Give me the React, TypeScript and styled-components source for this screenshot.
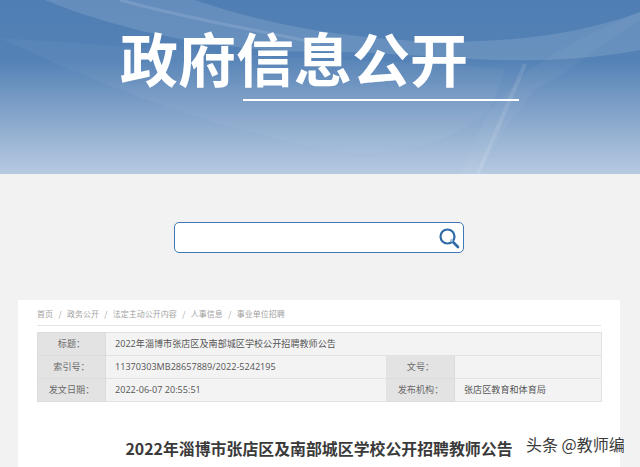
import React, {FC} from 'react';
import styled, {createGlobalStyle} from 'styled-components';

const GlobalStyle = createGlobalStyle`
  html, body {
    margin: 0;
    height: 467px;
    overflow: hidden;
    background: #f2f2f2;
    font-family: "Liberation Sans", "Noto Sans CJK SC", sans-serif;
  }
`

const Page = styled.div`
  position: relative;
  width: 640px;
  height: 467px;
  overflow: hidden;
`

const Banner = styled.header`
  position: relative;
  height: 174px;
  padding: 28px 0 0 120px;
  box-sizing: border-box;
  background: linear-gradient(180deg, #4f7eb4 0%, #5482b6 35%, #7fa0c8 62%, #b6cae1 100%);
  overflow: hidden;
`

const Waves = styled.svg`
  position: absolute;
  inset: 0;
`

const BannerTitle = styled.h1`
  position: relative;
  margin: 0;
  color: #fff;
  font: 700 58px/58px "Noto Sans CJK SC", sans-serif;
  white-space: nowrap;
`

const BannerRule = styled.div`
  position: relative;
  width: 276px;
  height: 2px;
  margin: 13px 0 0 123px;
  background: #fff;
`

const SearchRow = styled.div`
  display: flex;
  justify-content: center;
  padding: 48px 2px 47px 0;
`

const SearchBox = styled.div`
  width: 290px;
  height: 31px;
  box-sizing: border-box;
  border: 1.5px solid #3f78b6;
  border-radius: 5px;
  background: #fff;
  display: flex;
  align-items: center;
  justify-content: flex-end;
  padding-right: 2px;
`

const Card = styled.main`
  margin: 0 20px 0 18px;
  height: 168px;
  box-sizing: border-box;
  background: #fff;
  padding: 0 19px;
`

const Crumbs = styled.nav`
  height: 26px;
  box-sizing: border-box;
  padding-top: 8px;
  display: flex;
  gap: 5.4px;
  border-bottom: 1px solid #e4e4e4;
  color: #a2a2a2;
  font: 8px/12px "Noto Sans CJK SC", sans-serif;
`

const MetaTable = styled.table`
  width: 564px;
  margin-top: 6px;
  border-collapse: collapse;
  table-layout: fixed;
  font: 9.1px/12px "Open Sans", "Noto Sans CJK SC", sans-serif;
  color: #555;
`

const MetaRow = styled.tr`
  height: 23px;
`

const LabelCell = styled.th`
  padding: 0;
  border: 1px solid #dcdcdc;
  background: #e3e3e3;
  color: #6a6a6a;
  font-weight: 400;
`

const ValueCell = styled.td`
  padding: 0 0 0 9px;
  border: 1px solid #e2e2e2;
  background: #f3f3f3;
  white-space: nowrap;
`

const Heading = styled.h2`
  margin: 35px 0 0 0;
  text-align: center;
  color: #3a3a3a;
  font: 700 15.9px/24px "Noto Sans CJK SC", sans-serif;
  white-space: nowrap;
`

const Watermark = styled.div`
  position: absolute;
  left: 526px;
  top: 433px;
  color: #3a3a3a;
  font: 400 16px/22px "Noto Sans CJK SC", sans-serif;
  white-space: nowrap;
  text-shadow: 0 0 2px #fff;
`

const crumbs = ['首页', '政务公开', '法定主动公开内容', '人事信息', '事业单位招聘']

const SearchIcon: FC = () =>
  <svg width="24" height="24" viewBox="0 0 24 24" fill="none">
    <circle cx="10.5" cy="10.5" r="7" stroke="#2d6aa6" strokeWidth="2.2"/>
    <path d="M15.5 15.5L21 21" stroke="#2d6aa6" strokeWidth="2.6" strokeLinecap="round"/>
    <circle cx="14.6" cy="14.6" r="1.5" fill="#9db9d6"/>
  </svg>

const App: FC = () =>
  <Page>
    <GlobalStyle/>
    <Banner>
      <Waves width="640" height="174" viewBox="0 0 640 174">
        <path d="M45 0C130 35 230 52 330 52C430 52 520 72 640 50V12C560 42 470 44 400 40C320 34 260 22 195 0Z" fill="#fff" fillOpacity=".12"/>
        <path d="M0 38C90 80 210 130 340 152C420 160 480 130 520 78C560 45 610 25 640 12V20C600 45 565 75 535 90C510 120 490 150 478 174H460C480 130 495 100 505 70C430 60 330 62 250 55" fill="#fff" fillOpacity=".04"/>
        <path d="M525 64L478 174" stroke="#fff" strokeOpacity=".1" strokeWidth="4" fill="none"/>
        <path d="M120 0C200 22 280 34 320 44" stroke="#fff" strokeOpacity=".12" strokeWidth="3" fill="none"/>
      </Waves>
      <BannerTitle>政府信息公开</BannerTitle>
      <BannerRule/>
    </Banner>
    <SearchRow>
      <SearchBox>
        <SearchIcon/>
      </SearchBox>
    </SearchRow>
    <Card>
      <Crumbs>
        {crumbs.map((c, i) => <React.Fragment key={c}>
          {i > 0 && <span>/</span>}
          <span>{c}</span>
        </React.Fragment>)}
      </Crumbs>
      <MetaTable>
        <colgroup>
          <col width="68"/>
          <col width="281"/>
          <col width="68"/>
          <col width="147"/>
        </colgroup>
        <tbody>
          <MetaRow>
            <LabelCell>标题：</LabelCell>
            <ValueCell colSpan={3}>2022年淄博市张店区及南部城区学校公开招聘教师公告</ValueCell>
          </MetaRow>
          <MetaRow>
            <LabelCell>索引号：</LabelCell>
            <ValueCell>11370303MB28657889/2022-5242195</ValueCell>
            <LabelCell>文号：</LabelCell>
            <ValueCell/>
          </MetaRow>
          <MetaRow>
            <LabelCell>发文日期：</LabelCell>
            <ValueCell>2022-06-07 20:55:51</ValueCell>
            <LabelCell>发布机构：</LabelCell>
            <ValueCell>张店区教育和体育局</ValueCell>
          </MetaRow>
        </tbody>
      </MetaTable>
      <Heading>2022年淄博市张店区及南部城区学校公开招聘教师公告</Heading>
    </Card>
    <Watermark>头条 @教师编</Watermark>
  </Page>

export default App
